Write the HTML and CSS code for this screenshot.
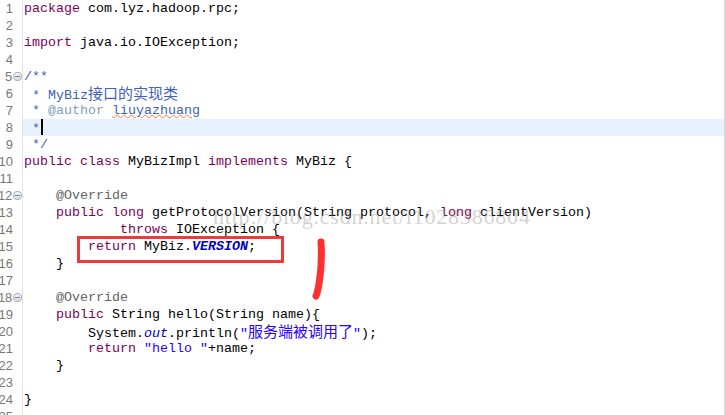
FILE: index.html
```html
<!DOCTYPE html>
<html lang="en">

<head>
    <meta charset="UTF-8">
    <title>MyBizImpl.java</title>
    <link rel="stylesheet" href="styles.css">
</head>

<body>
    <div class="editor">
        <div class="line"><div class="gutter"><span class="num">1</span></div><div class="code"><span class="kw">package</span> com.lyz.hadoop.rpc;</div></div>
        <div class="line"><div class="gutter"><span class="num">2</span></div><div class="code"></div></div>
        <div class="line"><div class="gutter"><span class="num">3</span></div><div class="code"><span class="kw">import</span> java.io.IOException;</div></div>
        <div class="line"><div class="gutter"><span class="num">4</span></div><div class="code"></div></div>
        <div class="line"><div class="gutter"><span class="num">5</span><span class="fold"></span></div><div class="code"><span class="doc">/**</span></div></div>
        <div class="line"><div class="gutter"><span class="num">6</span></div><div class="code"><span class="doc"> * MyBiz<span class="cjk">接口的实现类</span></span></div></div>
        <div class="line"><div class="gutter"><span class="num">7</span></div><div class="code"><span class="doc"> * <span class="tag">@author</span> <span class="typo">liuyazhuang</span></span></div></div>
        <div class="line current"><div class="gutter"><span class="num">8</span></div><div class="code"><span class="doc"> *</span><span class="caret"></span></div></div>
        <div class="line"><div class="gutter"><span class="num">9</span></div><div class="code"><span class="doc"> */</span></div></div>
        <div class="line"><div class="gutter"><span class="num">10</span></div><div class="code"><span class="kw">public</span> <span class="kw">class</span> MyBizImpl <span class="kw">implements</span> MyBiz {</div></div>
        <div class="line"><div class="gutter"><span class="num">11</span></div><div class="code"></div></div>
        <div class="line"><div class="gutter"><span class="num">12</span><span class="fold"></span></div><div class="code">    <span class="ann">@Override</span></div></div>
        <div class="line"><div class="gutter"><span class="num">13</span></div><div class="code">    <span class="kw">public</span> <span class="kw">long</span> getProtocolVersion(String protocol, <span class="kw">long</span> clientVersion)</div></div>
        <div class="line"><div class="gutter"><span class="num">14</span></div><div class="code">            <span class="kw">throws</span> IOException {</div></div>
        <div class="line"><div class="gutter"><span class="num">15</span></div><div class="code">        <span class="kw">return</span> MyBiz.<span class="const">VERSION</span>;</div></div>
        <div class="line"><div class="gutter"><span class="num">16</span></div><div class="code">    }</div></div>
        <div class="line"><div class="gutter"><span class="num">17</span></div><div class="code"></div></div>
        <div class="line"><div class="gutter"><span class="num">18</span><span class="fold"></span></div><div class="code">    <span class="ann">@Override</span></div></div>
        <div class="line"><div class="gutter"><span class="num">19</span></div><div class="code">    <span class="kw">public</span> String hello(String name){</div></div>
        <div class="line"><div class="gutter"><span class="num">20</span></div><div class="code">        System.<span class="field">out</span>.println(<span class="str">"<span class="cjk">服务端被调用了</span>"</span>);</div></div>
        <div class="line"><div class="gutter"><span class="num">21</span></div><div class="code">        <span class="kw">return</span> <span class="str">"hello "</span>+name;</div></div>
        <div class="line"><div class="gutter"><span class="num">22</span></div><div class="code">    }</div></div>
        <div class="line"><div class="gutter"><span class="num">23</span></div><div class="code"></div></div>
        <div class="line"><div class="gutter"><span class="num">24</span></div><div class="code">}</div></div>
        <div class="line"><div class="gutter"><span class="num">25</span></div><div class="code"></div></div>

        <!-- screenshot annotations -->
        <div class="watermark">http://blog.csdn.net/l1028386804</div>
        <div class="mark-box"></div>
        <svg class="mark-stroke" width="30" height="70" viewBox="0 0 30 70">
            <path d="M16 6 C17 20 16 36 14 48 C13 54 12 58 11 60" fill="none" stroke="#ff3030" stroke-width="7" stroke-linecap="round"/>
        </svg>
    </div>
</body>

</html>
```

FILE: styles.css
```css
* {
    margin: 0;
    padding: 0;
    box-sizing: border-box;
}

body {
    background-color: #fff;
    width: 725px;
    height: 415px;
    overflow: hidden;
}

.editor {
    position: relative;
    height: 415px;
    border-right: 1px solid #d8d8d8;
}

.line {
    display: flex;
    height: 17px;
}

.gutter {
    display: flex;
    align-items: center;
    width: 23px;
    border-right: 1px solid #e4e4e4;
    flex-shrink: 0;
}

.num {
    display: flex;
    justify-content: flex-end;
    width: 13px;
    overflow: hidden;
    font-family: "Liberation Sans", sans-serif;
    font-size: 13px;
    color: #787878;
    line-height: 17px;
}

.fold {
    width: 9px;
    height: 9px;
    margin-left: 1px;
    border: 1px solid #a6b0bc;
    border-radius: 50%;
    background: linear-gradient(#f4f6f8, #d6dce4);
    position: relative;
}

.fold::after {
    content: "";
    position: absolute;
    left: 1px;
    right: 1px;
    top: 3px;
    height: 1px;
    background: #7a8494;
}

.code {
    flex: 1;
    padding-left: 1px;
    white-space: pre;
    font-family: "Liberation Mono", monospace;
    font-size: 13.33px;
    line-height: 17px;
    color: #000;
}

.current .code {
    background-color: #e8f2fe;
}

.kw {
    color: #7f0055;
}

.doc {
    color: #3f5fbf;
}

.tag {
    color: #7f9fbf;
}

.typo {
    text-decoration: underline wavy #ff7a30;
    text-decoration-thickness: 1px;
    text-underline-offset: 0;
}

.ann {
    color: #646464;
}

.str {
    color: #2a00ff;
}

.field {
    color: #0000c0;
    font-style: italic;
}

.const {
    color: #0000c0;
    font-style: italic;
    font-weight: bold;
}

.cjk {
    font-family: "Noto Sans CJK SC", sans-serif;
    font-size: 15px;
    line-height: 15px;
}

.caret {
    display: inline-block;
    width: 2px;
    height: 16px;
    background: #000;
    vertical-align: -3px;
    margin-left: 1px;
}

.watermark {
    position: absolute;
    left: 213px;
    top: 204px;
    font-family: "Liberation Serif", serif;
    font-size: 22px;
    letter-spacing: 0.8px;
    color: rgba(140, 140, 140, 0.4);
    white-space: nowrap;
}

.mark-box {
    position: absolute;
    left: 77px;
    top: 236px;
    width: 207px;
    height: 27px;
    border: 3px solid #ee3a3a;
}

.mark-stroke {
    position: absolute;
    left: 305px;
    top: 236px;
}
```
